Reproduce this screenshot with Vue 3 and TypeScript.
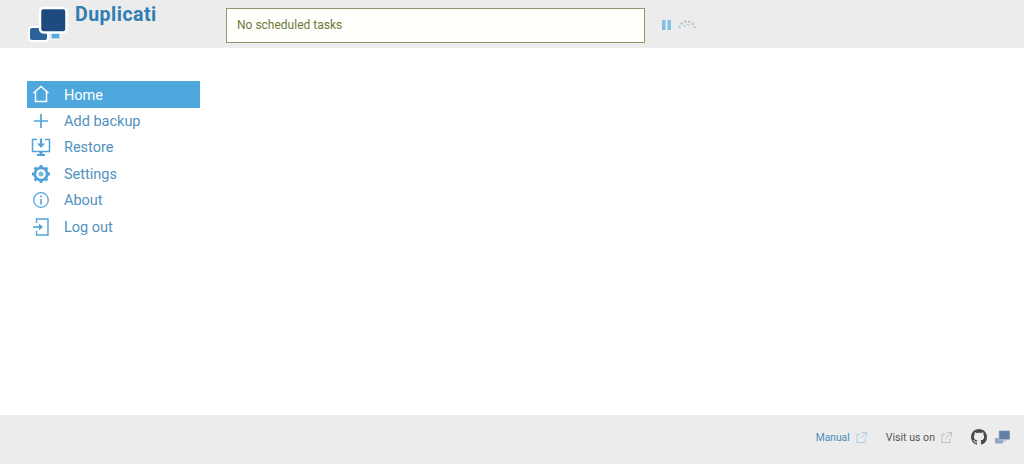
<script setup lang="ts">
const items = ['Home', 'Add backup', 'Restore', 'Settings', 'About', 'Log out'];
</script>

<template>
  <div class="page">
    <header class="header">
      <div class="brand">
        <svg class="logo" width="44" height="44" viewBox="0 0 44 44">
          <rect x="2" y="26" width="19" height="14" rx="3" fill="#2d6199" stroke="#fff" stroke-width="2" />
          <rect x="24" y="31" width="9" height="7" rx="1" fill="#55aade" stroke="#fff" stroke-width="1" />
          <rect x="13" y="7" width="26.500" height="24.500" rx="3.500" fill="#1e4a80" stroke="#fff" stroke-width="2.500" />
        </svg>
        <span class="name">Duplicati</span>
      </div>
      <div class="status">No scheduled tasks</div>
      <div class="controls">
        <svg width="10" height="12" viewBox="0 0 10 12"><rect x="0" y="1" width="3.500" height="10" fill="#82bde3" /><rect x="5.500" y="1" width="3.500" height="10" fill="#82bde3" /></svg>
        <svg width="18" height="12" viewBox="0 0 18 12" fill="none" stroke="#a9c7dc" stroke-width="2" stroke-dasharray="2.200 1.800"><path d="M1.500 9A7.500 6.500 0 0 1 16.500 9" /><path d="M6.500 8A2.500 2.500 0 0 1 11.500 8" stroke-width="1.400" /></svg>
      </div>
    </header>

    <main class="main">
      <nav class="nav">
        <a v-for="(item, i) in items" :key="item" class="row" :class="{ active: i === 0 }">
          <span class="icon">
            <svg v-if="i === 0" width="20" height="20" viewBox="0 0 20 20" fill="none" stroke="currentColor" stroke-width="1.500"><path d="M2.500 9 10 2.500 17.500 9M4.500 7.500v10h11v-10" /></svg>
            <svg v-else-if="i === 1" width="20" height="20" viewBox="0 0 20 20" fill="none" stroke="currentColor" stroke-width="1.700"><path d="M10 3v14M3 10h14" /></svg>
            <svg v-else-if="i === 2" width="20" height="20" viewBox="0 0 20 20" fill="none" stroke="currentColor" stroke-width="1.500"><path d="M6 2.500H1.500v12h17v-12H14" /><path d="M6 18h8" stroke-width="2" /><path d="M10 15v3" stroke-width="3" /><path d="M10 1.500v7" stroke-width="2.200" /><path d="M6 6.500h8L10 11z" fill="currentColor" stroke="none" /></svg>
            <svg v-else-if="i === 3" width="20" height="20" viewBox="0 0 20 20" fill="none" stroke="currentColor"><circle cx="10" cy="10" r="6.200" stroke-width="2.800" /><circle cx="10" cy="10" r="2.500" fill="currentColor" stroke="none" opacity=".75" /><path d="M10 1v3M10 16v3M1 10h3M16 10h3M3.600 3.600l2.100 2.100M14.300 14.300l2.100 2.100M3.600 16.400l2.100-2.100M14.300 5.700l2.100-2.100" stroke-width="2.800" /></svg>
            <svg v-else-if="i === 4" width="20" height="20" viewBox="0 0 20 20" fill="none" stroke="currentColor" stroke-width="1.300"><circle cx="10" cy="10" r="7.300" /><path d="M10 9v5.500" stroke-width="1.600" /><circle cx="10" cy="6.500" r="1" fill="currentColor" stroke="none" /></svg>
            <svg v-else width="20" height="20" viewBox="0 0 20 20" fill="none" stroke="currentColor" stroke-width="1.400"><path d="M5.500 6V2h11.500v16H5.500v-4" /><path d="M2 10h8" stroke-width="1.600" /><path d="M8 6.500 12 10l-4 3.500z" fill="currentColor" stroke="none" /></svg>
          </span>
          <span class="label">{{ item }}</span>
        </a>
      </nav>
    </main>

    <footer class="footer">
      <a class="link manual">Manual
        <svg width="11" height="11" viewBox="0 0 12 12" fill="none" stroke="#a9cbe4"><path d="M5 2.500H1v9h9V7M6.500.5h5v5M11.500.5 5 7" /></svg>
      </a>
      <a class="link visit">Visit us on
        <svg width="11" height="11" viewBox="0 0 12 12" fill="none" stroke="#bdbdbd"><path d="M5 2.500H1v9h9V7M6.500.5h5v5M11.500.5 5 7" /></svg>
      </a>
      <svg class="gh" width="16" height="16" viewBox="0 0 16 16"><path fill="#4a4a4a" d="M8 0C3.580 0 0 3.580 0 8c0 3.540 2.290 6.530 5.470 7.590.4.070.55-.17.55-.38 0-.19-.01-.82-.01-1.490-2.010.37-2.530-.49-2.690-.94-.09-.23-.48-.94-.82-1.130-.28-.15-.68-.52-.01-.53.630-.01 1.080.58 1.230.82.720 1.210 1.870.87 2.330.66.070-.52.280-.87.510-1.070-1.780-.2-3.640-.89-3.640-3.950 0-.87.310-1.590.820-2.150-.08-.2-.36-1.020.08-2.120 0 0 .67-.21 2.200.82.640-.18 1.320-.27 2-.27s1.360.09 2 .27c1.530-1.040 2.200-.82 2.200-.82.440 1.100.16 1.920.08 2.120.51.560.82 1.270.82 2.150 0 3.070-1.870 3.750-3.650 3.950.29.25.54.73.54 1.480 0 1.070-.01 1.930-.01 2.200 0 .21.150.46.550.38A8.010 8.010 0 0 0 16 8c0-4.420-3.580-8-8-8z" /></svg>
      <svg class="mini" width="15" height="14" viewBox="0 0 16 14"><rect x="0" y="8" width="8.500" height="6" rx="1" fill="#8fa6c6" /><rect x="8.500" y="9" width="3.500" height="3" fill="#b3c4da" /><rect x="4" y="0" width="12" height="10" rx="1" fill="#6580a8" stroke="#ececec" stroke-width=".6" /></svg>
    </footer>
  </div>
</template>

<style>
html, body { margin: 0; padding: 0; }
</style>

<style scoped>
.page {
  display: flex;
  flex-direction: column;
  height: 464px;
  width: 1024px;
  overflow: hidden;
  background: #fff;
  font-family: Roboto, "Noto Sans", sans-serif;
}
.header {
  display: flex;
  flex: none;
  height: 48px;
  background: #ececec;
  align-items: flex-start;
}
.brand {
  display: flex;
  width: 226px;
  flex: none;
  padding-left: 27px;
  box-sizing: border-box;
}
.logo {
  display: block;
  margin-top: 1px;
  flex: none;
}
.name {
  margin-left: 4px;
  margin-top: 3px;
  font-size: 19.500px;
  line-height: 24px;
  font-weight: 700;
  color: #2f7db3;
  letter-spacing: .5px;
}
.status {
  box-sizing: border-box;
  width: 419px;
  height: 35px;
  margin-top: 8px;
  padding-left: 10px;
  flex: none;
  background: #fffffb;
  border: 1px solid #8d9a6b;
  font-size: 12px;
  line-height: 33px;
  color: #6b7a3c;
}
.controls {
  display: flex;
  align-items: center;
  gap: 6px;
  height: 14px;
  margin: 18px 0 0 17px;
}
.main {
  flex: 1;
  padding: 33px 0 0 27px;
}
.nav {
  width: 173px;
  display: flex;
  flex-direction: column;
}
.row {
  display: flex;
  align-items: center;
  height: 26.500px;
  color: #4fa3d9;
}
.row .label {
  margin-left: 17px;
  padding-top: 1px;
  font-size: 14.500px;
  color: #4f92bf;
}
.row.active {
  background: #4ea8dd;
  color: #fff;
}
.row.active .label { color: #fff; padding-top: 2px; }
.icon {
  display: flex;
  flex: none;
  width: 20px;
  height: 20px;
  margin-left: 4px;
  margin-right: -4px;
}
.footer {
  display: flex;
  flex: none;
  height: 49px;
  box-sizing: border-box;
  background: #ececec;
  align-items: center;
  justify-content: flex-end;
  padding: 0 14px 5px 0;
}
.link {
  display: flex;
  align-items: center;
  gap: 6px;
  font-size: 10.600px;
}
.manual { color: #4a8dbd; margin-right: 19px; font-size: 10.300px; }
.visit { color: #555; margin-right: 19px; }
.mini { margin-left: 8px; }
</style>
